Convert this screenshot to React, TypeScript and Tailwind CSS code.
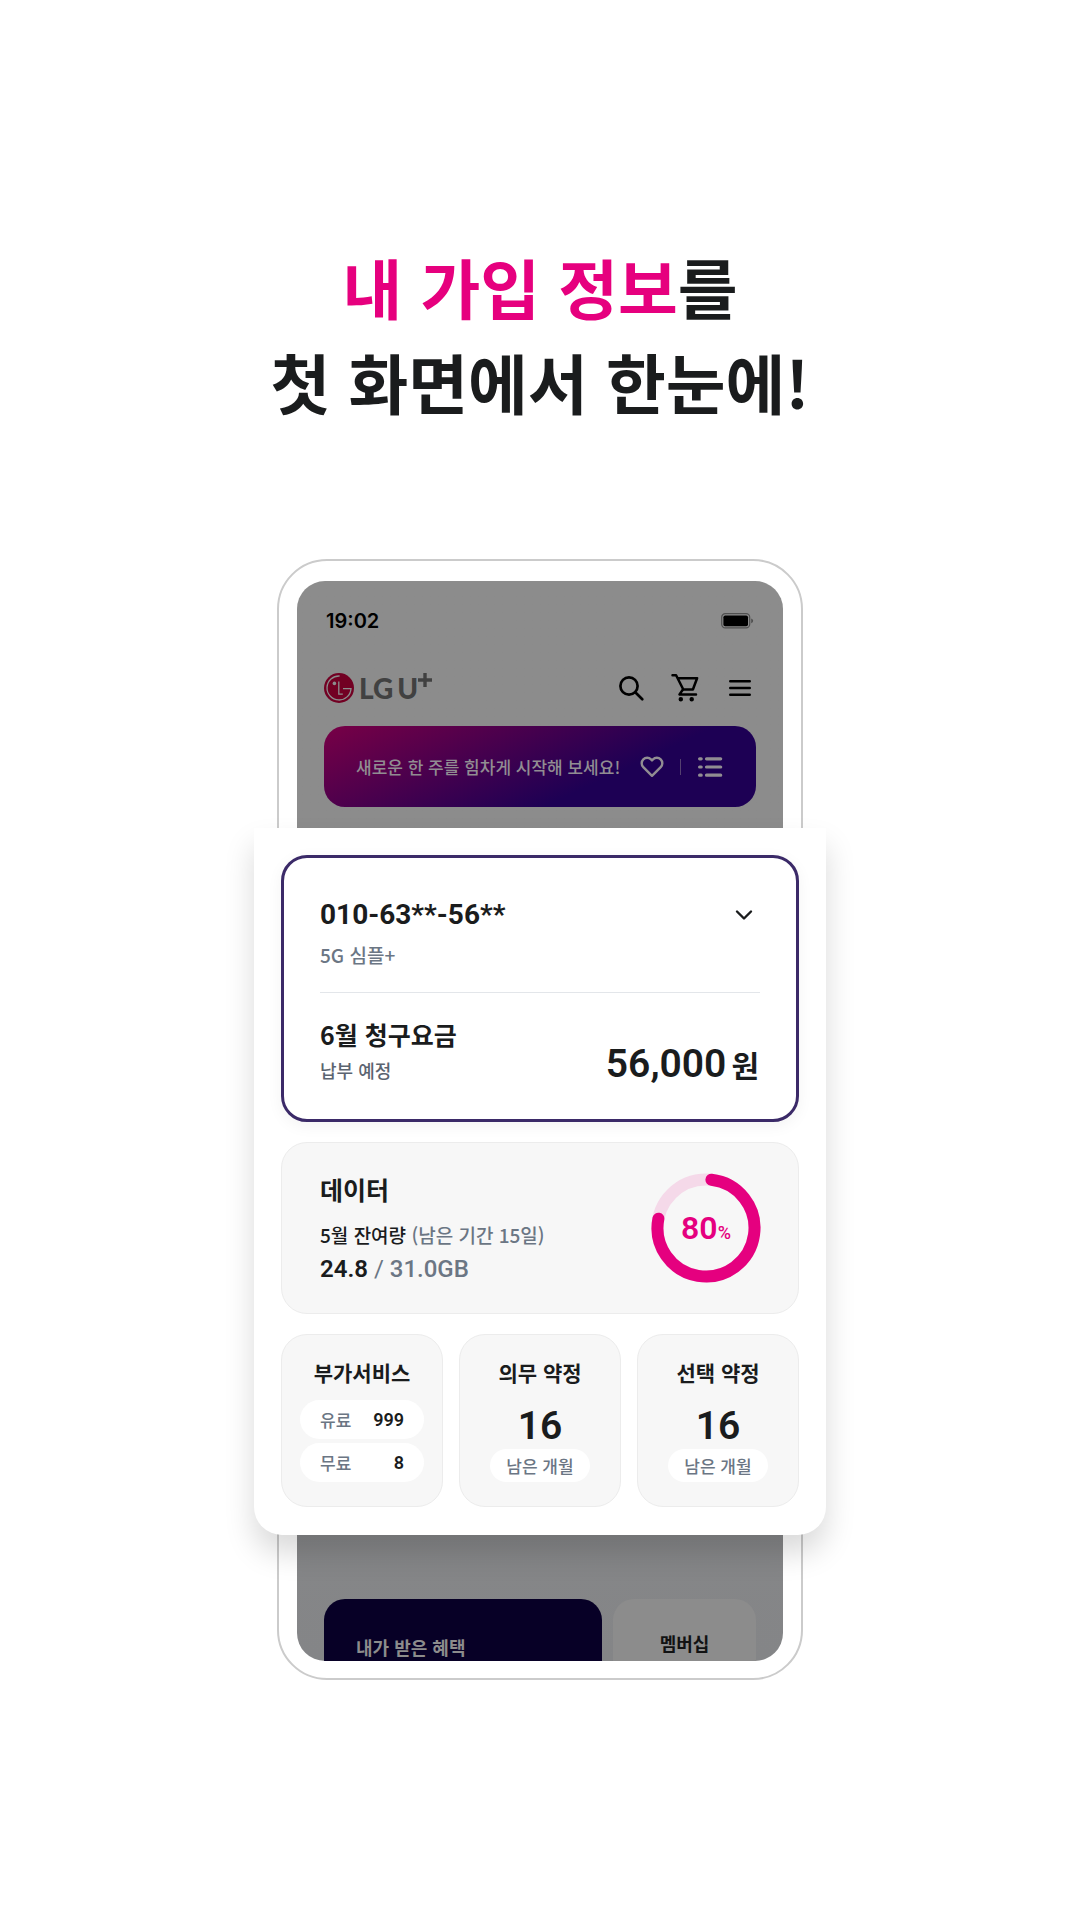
import type { ReactNode } from "react";

const KR = "font-['Noto_Sans_CJK_KR','Noto_Sans',sans-serif]";
const NUM = "font-['Roboto','Noto_Sans_CJK_KR',sans-serif]";

function SearchIcon() {
  return (
    <svg width="28" height="28" viewBox="0 0 28 28" fill="none" stroke="currentColor" strokeWidth="2.7" strokeLinecap="round">
      <circle cx="12" cy="12" r="8.6" />
      <path d="M18.5 18.5l6.8 6.8" />
    </svg>
  );
}

function CartIcon() {
  return (
    <svg width="28" height="30" viewBox="0 0 28 30" fill="none" stroke="currentColor" strokeWidth="2.5" strokeLinecap="round" strokeLinejoin="round">
      <path d="M1.5 2.2h3.6l7.2 14.3h9.6l4.2-11.3H6.8" />
      <path d="M11.8 16.7l-3.3 4.7H25" />
      <circle cx="9.8" cy="26.3" r="1" fill="currentColor" />
      <circle cx="20.7" cy="26.3" r="1" fill="currentColor" />
    </svg>
  );
}

function MenuIcon() {
  return (
    <svg width="22" height="18" viewBox="0 0 22 18" fill="none" stroke="currentColor" strokeWidth="2.6" strokeLinecap="round">
      <path d="M1.3 2.2h19.4M1.3 9h19.4M1.3 15.8h19.4" />
    </svg>
  );
}

function HeartIcon() {
  return (
    <svg width="24" height="22" viewBox="0 0 24 22" fill="none" stroke="currentColor" strokeWidth="2.4" strokeLinejoin="round">
      <path d="M12 19.8L3.3 11.2a5.5 5.5 0 0 1 0-7.8 5.4 5.4 0 0 1 7.7 0l1 1 1-1a5.4 5.4 0 0 1 7.7 0 5.5 5.5 0 0 1 0 7.8z" />
    </svg>
  );
}

function ListIcon() {
  return (
    <svg width="26" height="22" viewBox="0 0 26 22" fill="none" stroke="currentColor" strokeWidth="3.2" strokeLinecap="round">
      <path d="M2.6 2.8h1.6M2.6 11h1.6M2.6 19.2h1.6M9.5 2.8h14.2M9.5 11h14.2M9.5 19.2h14.2" />
    </svg>
  );
}

function BatteryIcon() {
  return (
    <svg width="33" height="16" viewBox="0 0 33 16">
      <rect x="0.7" y="0.7" width="28" height="14.2" rx="3.6" fill="none" stroke="#505050" strokeWidth="1.2" />
      <rect x="2.4" y="2.4" width="24.6" height="10.8" rx="1.8" fill="#000" />
      <path d="M30.2 5.4c1.2.4 1.9 1.3 1.9 2.4s-.7 2-1.9 2.4z" fill="#505050" />
    </svg>
  );
}

function LgSymbol() {
  return (
    <svg width="30" height="30" viewBox="0 0 30 30">
      <circle cx="15" cy="15" r="15" fill="#720023" />
      <g fill="none" stroke="#8c8c8c" strokeWidth="1.3">
        <path d="M15.6 3A12 12 0 1 0 27 15.6h-8" />
        <path d="M14.8 8.6v12.6h4" />
      </g>
      <circle cx="10.4" cy="10.4" r="1.8" fill="#8c8c8c" />
    </svg>
  );
}

function Logo() {
  return (
    <a href="#" aria-label="LG U+" className="flex items-center font-['Lato',sans-serif] font-black text-[#414141]">
      <LgSymbol />
      <span className="ml-[5px] flex items-center text-[28px] leading-7">
        <span>LG</span>
        <span className="ml-1">U</span>
      </span>
      <svg width="14" height="14" viewBox="0 0 14 14" className="mb-4">
        <path d="M7 0v14M0 7h14" stroke="currentColor" strokeWidth="3.4" />
      </svg>
    </a>
  );
}

function Usage({ percent }: { percent: number }) {
  return (
    <div className="relative flex h-[110px] w-[110px] shrink-0 items-center justify-center">
      <svg viewBox="0 0 110 110" className="absolute inset-0" fill="none" strokeWidth="12">
        <circle cx="55" cy="55" r="48.5" stroke="#f5d9e9" />
        <path d="M60.4 6.8A48.5 48.5 0 1 1 7.4 45.7" stroke="#e5007f" strokeLinecap="round" />
      </svg>
      <p className={`${NUM} relative flex items-baseline text-[#e5007f]`}>
        <span className="text-[32px] leading-8 font-semibold">{percent}</span>
        <span className="text-[18px] leading-5 font-medium">%</span>
      </p>
    </div>
  );
}

function SmallCard({ title, children }: { title: string; children: ReactNode }) {
  return (
    <section className="flex flex-1 flex-col items-center rounded-[26px] border border-[#ececec] bg-[#f7f7f7] px-[18px] pt-[23px] pb-6">
      <h3 className="text-[21px] leading-7 font-bold whitespace-nowrap">{title}</h3>
      {children}
    </section>
  );
}

function ServiceRow({ label, count }: { label: string; count: number }) {
  return (
    <div className="flex h-[39px] items-center justify-between rounded-full bg-white px-5">
      <dt className="text-[17px] leading-6 font-medium text-[#6b7684]">{label}</dt>
      <dd className={`${NUM} text-lg leading-6 font-semibold`}>{count}</dd>
    </div>
  );
}

function ContractCard({ title, months }: { title: string; months: number }) {
  return (
    <SmallCard title={title}>
      <p className={`${NUM} mt-5 text-[39px] leading-10 font-semibold`}>{months}</p>
      <p className="mt-[3px] rounded-full bg-white px-4 pt-px text-[17px] leading-8 font-medium whitespace-nowrap text-[#6b7684]">남은 개월</p>
    </SmallCard>
  );
}

function Phone() {
  return (
    <div className="col-start-1 row-start-1 flex w-full max-w-[526px] flex-col rounded-[50px] border-2 border-[#cbcbcb] bg-white px-[18px] pt-5 pb-[17px]">
      <div className="flex flex-1 flex-col justify-between overflow-hidden rounded-[28px] bg-linear-to-b from-[#8c8c8c] from-40% to-[#848587] px-[27px]">
        <div>
          <div className="flex items-center justify-between pt-[26px] pr-[2px] pl-[2px]">
            <span className="font-['Inter',sans-serif] text-[20px] leading-7 font-semibold text-black">19:02</span>
            <BatteryIcon />
          </div>
          <header className="mt-[38px] flex items-center justify-between pr-[5px] text-black">
            <Logo />
            <div className="flex items-center gap-[26px]">
              <button type="button" aria-label="검색"><SearchIcon /></button>
              <button type="button" aria-label="장바구니"><CartIcon /></button>
              <button type="button" aria-label="메뉴" className="ml-1"><MenuIcon /></button>
            </div>
          </header>
          <div className="mt-[23px] flex h-[81px] items-center rounded-[21px] bg-linear-[155deg] from-[#780046] to-[#1d0054] to-65% pr-[33px] pl-8 text-[#918d92]">
            <p className="flex-1 text-[17px] leading-7 font-medium whitespace-nowrap">새로운 한 주를 힘차게 시작해 보세요!</p>
            <button type="button" aria-label="찜"><HeartIcon /></button>
            <span className="mx-4 h-4 w-px bg-[#54406f]" />
            <button type="button" aria-label="목록"><ListIcon /></button>
          </div>
        </div>
        <div className="flex h-[62px] gap-[11px] font-bold">
          <a href="#" className="flex-1 rounded-t-[21px] bg-[#070026] pt-[34px] pl-8 text-lg leading-7 text-[#8c8c8c]">내가 받은 혜택</a>
          <a href="#" className="w-[143px] rounded-t-[21px] bg-[#8c8c8c] pt-[30px] text-center text-lg leading-7 text-[#111213]">멤버십</a>
        </div>
      </div>
    </div>
  );
}

function InfoPanel() {
  return (
    <div className="z-10 col-start-1 row-start-1 mt-[269px] mb-[145px] flex w-full max-w-[572px] flex-col gap-5 rounded-b-[28px] bg-white p-[27px] pb-7 shadow-[0_18px_30px_rgba(0,0,0,0.15)]">
      <section className="rounded-[26px] border-[3px] border-[#3b2a68] bg-white px-9 pt-[39px] pb-[35px] shadow-[0_4px_16px_rgba(0,0,0,0.05)]">
        <button type="button" className="flex w-full items-center justify-between pr-1">
          <span className={`${NUM} text-[28px] leading-9 font-bold`}>010-63**-56**</span>
          <svg width="24" height="24" viewBox="0 0 24 24" fill="none" stroke="currentColor" strokeWidth="2.4" strokeLinecap="round" strokeLinejoin="round">
            <path d="M5 8.5l7 7 7-7" />
          </svg>
        </button>
        <p className="mt-2 text-[19px] leading-7 font-medium text-[#6b7684]">5G 심플+</p>
        <div className="mt-[23px] flex items-end justify-between border-t border-[#e3e6ea] pt-[23px]">
          <div>
            <h2 className="text-[25px] leading-9 font-bold">6월 청구요금</h2>
            <p className="mt-1 text-[18px] leading-7 font-medium text-[#5b6470]">납부 예정</p>
          </div>
          <p className="flex items-baseline gap-[5px] pr-px">
            <span className={`${NUM} text-[39px] leading-10 font-semibold`}>56,000</span>
            <span className="text-[30px] leading-9 font-bold">원</span>
          </p>
        </div>
      </section>

      <section className="flex items-center justify-between rounded-[26px] border border-[#ececec] bg-[#f7f7f7] pt-7 pr-[37px] pb-7 pl-[38px]">
        <div>
          <h2 className="text-[25px] leading-9 font-bold">데이터</h2>
          <p className="mt-[14px] text-[19px] leading-7 font-medium">
            5월 잔여량 <span className="text-[#6b7684]">(남은 기간 15일)</span>
          </p>
          <p className={`${NUM} mt-1 text-2xl leading-8 text-[#6b7684]`}>
            <strong className="font-semibold text-[#1a1c1d]">24.8</strong> / <span className="font-medium">31.0GB</span>
          </p>
        </div>
        <Usage percent={80} />
      </section>

      <div className="flex gap-4">
        <SmallCard title="부가서비스">
          <dl className="mt-[14px] flex w-full flex-col gap-1">
            <ServiceRow label="유료" count={999} />
            <ServiceRow label="무료" count={8} />
          </dl>
        </SmallCard>
        <ContractCard title="의무 약정" months={16} />
        <ContractCard title="선택 약정" months={16} />
      </div>
    </div>
  );
}

export default function App() {
  return (
    <main lang="ko" className={`${KR} min-h-screen bg-white pt-[239px] pb-20 text-[#1a1c1d]`}>
      <h1 className="text-center text-[65px] leading-[95px] font-bold">
        <span className="text-[#e6007e]">내 가입 정보</span>를
        <br />첫 화면에서 한눈에!
      </h1>
      <div className="mt-[130px] grid grid-cols-1 justify-items-center">
        <Phone />
        <InfoPanel />
      </div>
    </main>
  );
}
